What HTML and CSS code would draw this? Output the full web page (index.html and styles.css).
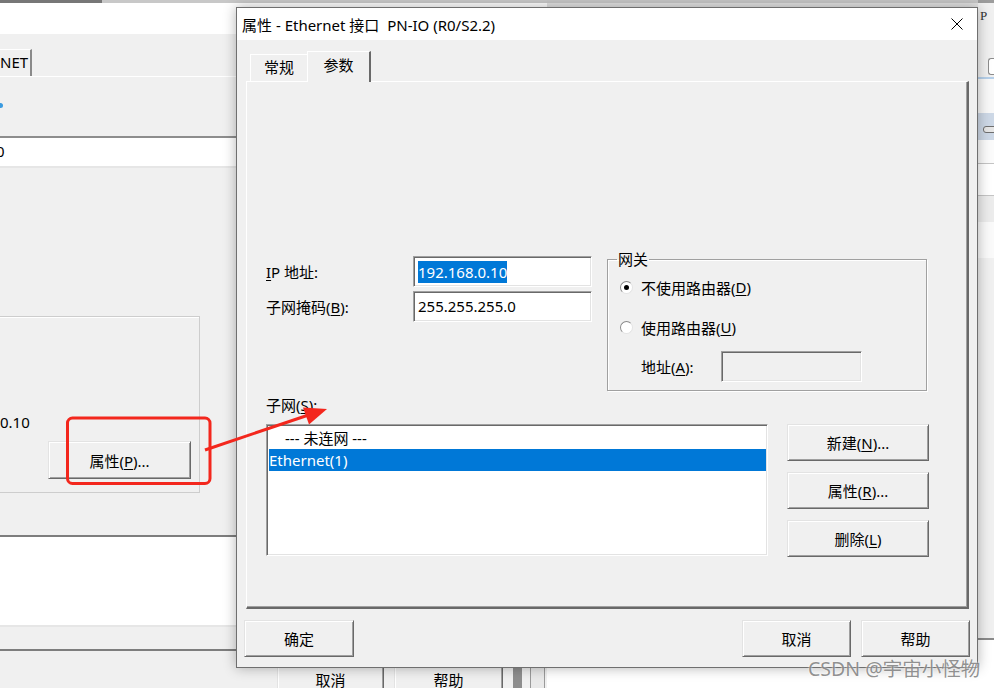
FILE: index.html
```html
<!DOCTYPE html>
<html lang="zh-CN">
<head>
    <meta charset="UTF-8">
    <meta name="viewport" content="width=device-width, initial-scale=1.0">
    <title>属性 - Ethernet 接口 PN-IO (R0/S2.2)</title>
    <link rel="stylesheet" href="styles.css">
</head>
<body>
<div class="desk">

    <!-- window behind, right side -->
    <div class="win-right">
        <div class="wr-top">P</div>
        <div class="wr-tool"><span class="wr-box"></span></div>
        <div class="wr-light"></div>
        <div class="wr-band"><span class="wr-knob"></span></div>
        <div class="wr-row"></div>
        <div class="wr-row2"></div>
        <div class="wr-gray"></div>
        <div class="wr-pale"></div>
        <div class="wr-body"></div>
    </div>

    <!-- window behind, left side -->
    <div class="win-back">
        <div class="bw-top"></div>
        <div class="bw-title"></div>
        <div class="bw-tabs"><div class="bw-tab">NET</div></div>
        <div class="bw-panel">
            <div class="bw-dot"></div>
            <div class="bw-field">0</div>
            <div class="bw-group">
                <div class="bw-ip">0.10</div>
                <button class="btn bw-btn">属性(<u>P</u>)...</button>
            </div>
            <div class="bw-list"></div>
            <div class="bw-rule"></div>
            <div class="bw-foot">
                <button class="btn">取消</button>
                <button class="btn wide">帮助</button>
                <span class="bw-grip"></span>
                <span class="bw-grip2"></span>
            </div>
        </div>
    </div>

    <!-- dialog -->
    <div class="dialog">
        <div class="dlg-title">
            <span>属性 - Ethernet 接口&nbsp; PN-IO (R0/S2.2)</span>
            <svg class="close" width="12" height="12" viewBox="0 0 12 12"><path d="M0.5 0.5L11.5 11.5M11.5 0.5L0.5 11.5" stroke="#000" stroke-width="1"/></svg>
        </div>
        <div class="dlg-body">
            <div class="tabs">
                <div class="tab">常规</div>
                <div class="tab on">参数</div>
            </div>
            <div class="panel">
                <div class="net-row">
                    <div class="addr">
                        <label><u>I</u>P 地址:</label>
                        <div class="edit sunken"><span class="hl">192.168.0.10</span></div>
                        <label>子网掩码(<u>B</u>):</label>
                        <div class="edit sunken">255.255.255.0</div>
                    </div>
                    <fieldset class="gw">
                        <legend>网关</legend>
                        <div class="opt first"><span class="radio on"></span>不使用路由器(<u>D</u>)</div>
                        <div class="opt"><span class="radio"></span>使用路由器(<u>U</u>)</div>
                        <div class="gw-addr">
                            <label>地址(<u>A</u>):</label>
                            <div class="edit sunken off"></div>
                        </div>
                    </fieldset>
                </div>
                <div class="sub-label">子网(<u>S</u>):</div>
                <div class="sub-row">
                    <div class="list sunken">
                        <div class="item indent">--- 未连网 ---</div>
                        <div class="item sel">Ethernet(1)</div>
                    </div>
                    <div class="side">
                        <button class="btn">新建(<u>N</u>)...</button>
                        <button class="btn">属性(<u>R</u>)...</button>
                        <button class="btn">删除(<u>L</u>)</button>
                    </div>
                </div>
            </div>
            <div class="foot">
                <button class="btn ok">确定</button>
                <button class="btn">取消</button>
                <button class="btn">帮助</button>
            </div>
        </div>
    </div>

    <!-- red annotation -->
    <svg class="marks" width="994" height="688" viewBox="0 0 994 688">
        <rect x="67.5" y="418" width="142.5" height="65.5" rx="5" fill="none" stroke="#f3271d" stroke-width="3"/>
        <line x1="205" y1="450" x2="310" y2="414.5" stroke="#f3271d" stroke-width="3"/>
        <polygon points="327,409 303,407.5 309,424.5" fill="#f3271d"/>
    </svg>

    <div class="wm">CSDN @宇宙小怪物</div>
</div>
</body>
</html>
```

FILE: styles.css
```css
* { box-sizing: border-box; }
body { margin: 0; background: #fff; font-family: "Noto Sans", "Noto Sans CJK SC", sans-serif; font-size: 15px; color: #000; }
.desk { position: relative; width: 994px; height: 688px; overflow: hidden; background: #fff; }
u { text-decoration: underline; text-underline-offset: 2px; }
button { font: inherit; color: inherit; padding: 0; margin: 0; }

/* win32 look */
.btn { display: block; height: 37px; background: #f0f0f0; border: 1px solid; border-color: #e3e3e3 #696969 #696969 #e3e3e3; box-shadow: inset 1px 1px #fff, inset -1px -1px #a0a0a0; text-align: center; }
.sunken { border: 1px solid; border-color: #a0a0a0 #fff #fff #a0a0a0; box-shadow: inset 1px 1px #696969, inset -1px -1px #e3e3e3; }

/* background window (right) */
.win-right { position: absolute; left: 547px; top: 0; width: 447px; height: 688px; padding-left: 431px; background: linear-gradient(#c6c6c6 0 3px, #e2e2e2 3px 7px, #fff 7px); }
.wr-top { height: 55px; background: #f0f0f0; font-family: "Liberation Serif", serif; font-size: 13px; line-height: 13px; color: #333; padding: 6px 0 0 2px; border-top: 3px solid #9c9c9c; }
.wr-tool { height: 22px; background: #f0f0f0; padding: 3px 0 0 10px; }
.wr-box { display: block; height: 17px; border: 1px solid #8c8c8c; border-right: none; border-radius: 3px 0 0 3px; background: #fff; }
.wr-light { height: 36px; background: #f8f8f8; border-top: 2px solid #b6d0ea; }
.wr-band { height: 27px; background: #cdd8e6; padding: 13px 0 0 5px; }
.wr-knob { display: block; width: 14px; height: 7px; border: 1px solid #6f6f6f; border-radius: 3px; background: #e6e6e6; }
.wr-row { height: 24px; background: #fbfbfb; border-bottom: 1px solid #c4c4c4; }
.wr-row2 { height: 32px; background: #fff; border-bottom: 1px solid #c4c4c4; }
.wr-gray { height: 26px; background: #ececec; }
.wr-pale { height: 36px; background: #fafafa; }
.wr-body { height: 382px; background: #f0f0f0; border-bottom: 2px solid #8a8a8a; }

/* background window (left) */
.win-back { position: absolute; left: 0; top: 0; width: 547px; height: 688px; background: #f0f0f0; }
.bw-top { height: 3px; background: linear-gradient(to right, #777 102px, #c8c8c8 102px); }
.bw-title { height: 31px; background: #fff; }
.bw-tabs { height: 42px; display: flex; align-items: flex-end; }
.bw-tab { width: 32px; height: 27px; border-top: 1px solid #fff; border-right: 2px solid #8a8a8a; text-align: right; padding-right: 6px; line-height: 25px; }
.bw-panel { border-top: 1px solid #fff; }
.bw-dot { width: 3px; height: 5px; margin-top: 26px; background: #3a9be0; border-radius: 0 3px 3px 0; }
.bw-field { margin-top: 28px; height: 32px; background: #fff; border-top: 2px solid #8d8d8d; border-bottom: 2px solid #e6e6e6; line-height: 27px; text-indent: -4px; overflow: hidden; }
.bw-group { margin: 148px 0 0 -2px; width: 202px; height: 177px; border: 1px solid #cdcdcd; box-shadow: inset 1px 1px #fff; padding: 95px 0 0 1px; }
.bw-ip { line-height: 20px; }
.bw-btn { width: 143px; height: 38px; margin: 9px 0 0 48px; }
.bw-list { margin-top: 42px; height: 92px; background: #fff; border-top: 2px solid #7d7d7d; border-bottom: 2px solid #e6e6e6; }
.bw-rule { margin-top: 22px; height: 2px; background: #7d7d7d; }
.bw-foot { display: flex; gap: 10px; margin-top: 11px; padding-left: 277px; }
.bw-foot .btn { width: 107px; line-height: 33px; }
.bw-foot .wide { width: 109px; }
.bw-grip { width: 9px; height: 30px; background: #8e8e8e; }
.bw-grip2 { width: 15px; height: 30px; margin-left: -2px; border: 1px solid #9a9a9a; background: #e9e9e9; }

/* dialog */
.dialog { position: absolute; left: 236px; top: 7px; width: 742px; height: 661px; overflow: hidden; background: #f0f0f0; border: 1px solid #6f6f6f; box-shadow: 0 0 12px rgba(0, 0, 0, 0.3); }
.dlg-title { height: 32px; background: #fff; display: flex; align-items: center; justify-content: space-between; padding: 0 14px 0 5px; }
.dlg-body { padding: 11px 8px 0 9px; }
.tabs { display: flex; align-items: flex-end; height: 30px; padding-left: 4px; }
.tab { width: 57px; height: 27px; border-top: 1px solid #fff; border-left: 1px solid #fff; text-align: center; line-height: 25px; }
.tab.on { width: 64px; height: 31px; margin-bottom: -1px; border-right: 2px solid #696969; background: #f0f0f0; position: relative; z-index: 1; line-height: 27px; }
.panel { height: 528px; border-top: 1px solid #fff; border-left: 1px solid #fff; border-right: 2px solid #696969; border-bottom: 2px solid #696969; box-shadow: inset -1px -1px #a0a0a0; padding: 174px 0 0 19px; }

.net-row { display: flex; align-items: flex-start; }
.addr { display: grid; grid-template-columns: 147px 179px; grid-auto-rows: 31px; row-gap: 4px; align-items: center; }
.edit { height: 31px; padding: 0 4px; line-height: 29px; background: #fff; white-space: nowrap; }
.edit.off { background: #f0f0f0; width: 141px; }
.hl { display: inline-block; line-height: 22px; vertical-align: middle; background: #0078d7; color: #fff; margin-top: -2px; }

.gw { margin: -6px 0 0 15px; width: 320px; height: 141px; border: 1px solid #a0a0a0; box-shadow: 1px 1px #fff, inset 1px 1px #fff; padding: 0 0 0 12px; min-width: 0; }
.gw legend { padding: 0 1px; margin-left: -3px; line-height: 18px; }
.opt { display: flex; align-items: center; height: 24px; margin-top: 16px; }
.opt.first { margin-top: 7px; }
.radio { display: flex; align-items: center; justify-content: center; width: 13px; height: 13px; margin-right: 8px; border-radius: 50%; border: 1px solid; border-color: #8a8a8a #e3e3e3 #e3e3e3 #8a8a8a; background: #fff; }
.radio.on::after { content: ""; width: 5px; height: 5px; border-radius: 50%; background: #000; }
.gw-addr { display: flex; align-items: center; margin-top: 12px; padding-left: 21px; }
.gw-addr label { width: 80px; }

.sub-label { margin-top: 4px; line-height: 20px; }
.sub-row { display: flex; margin-top: 9px; }
.list { width: 502px; height: 132px; background: #fff; padding: 2px 1px 0 2px; }
.item { height: 22px; line-height: 22px; white-space: nowrap; }
.item.indent { padding-left: 16px; }
.item.sel { background: #0078d7; color: #fff; }
.side { display: flex; flex-direction: column; gap: 11px; margin-left: 19px; }
.side .btn { width: 142px; }

.foot { display: flex; margin: 11px -1px 0 -2px; }
.foot .btn { width: 109px; }
.foot .ok { width: 110px; margin-right: auto; }
.foot .ok + .btn { margin-right: 10px; }

/* overlays */
.marks { position: absolute; left: 0; top: 0; pointer-events: none; }
.wm { position: absolute; left: 808px; top: 657px; font-size: 19.5px; line-height: 24px; white-space: nowrap; color: rgba(110, 110, 110, 0.75); text-shadow: 0 0 2px #fff; }
```
